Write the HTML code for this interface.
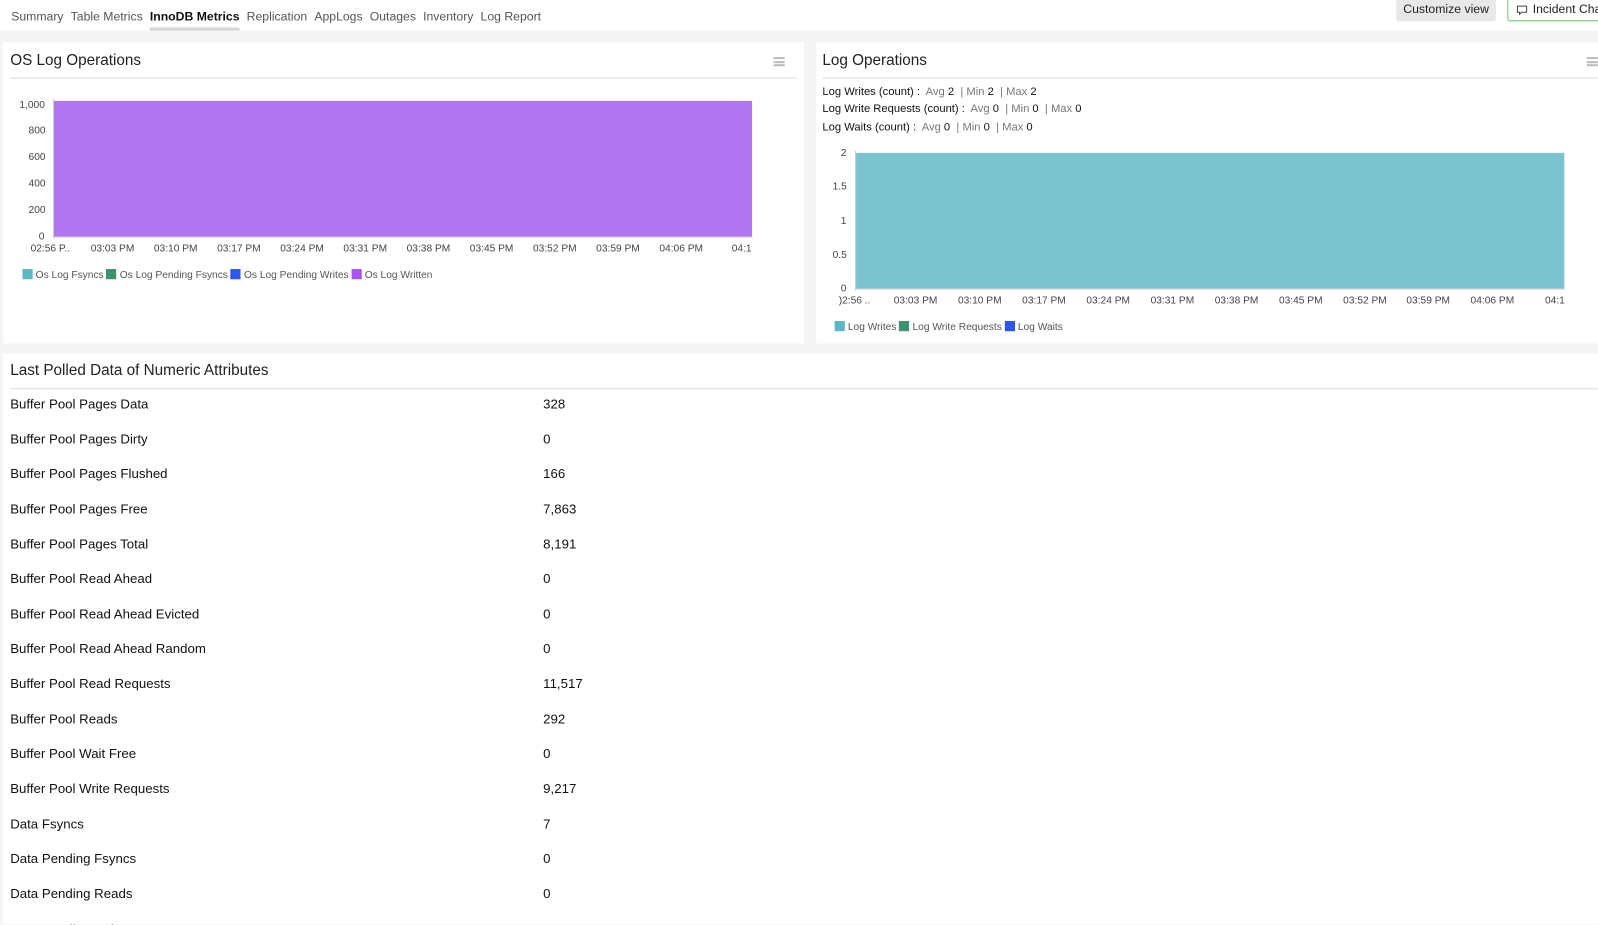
<!DOCTYPE html>
<html><head><meta charset="utf-8"><style>
*{margin:0;padding:0;box-sizing:border-box}
html,body{width:1598px;height:925px;overflow:hidden;background:#f5f5f5}
#w{position:absolute;left:0;top:0;width:1568px;height:907px;overflow:hidden;transform:scale(1.0191);transform-origin:0 0;font-family:"Liberation Sans",sans-serif;color:#222}
.top{position:absolute;left:0;top:0;width:1568px;height:30px;background:#fff}
.tabs{position:absolute;left:11px;top:9px;font-size:12px;color:#555;white-space:nowrap}
.tabs span{margin-right:7px}
.tabs .act{color:#111;font-weight:bold;border-bottom:3px solid #d5d5d5;padding-bottom:4px}
.btn1{position:absolute;left:1370px;top:0;width:98px;height:21px;background:#e8e8e8;border-radius:0 0 3px 3px;font-size:12px;text-align:center;line-height:18px;color:#222}
.btn2{position:absolute;left:1479px;top:0;width:130px;height:21px;border:1px solid #5cb85c;border-top:none;border-radius:0 0 3px 3px;font-size:12px;line-height:18px;padding-left:24px;color:#222;background:#fff}
.panel{position:absolute;background:#fff}
.ttl{position:absolute;left:7px;top:9px;font-size:15px;color:#222}
.hr{position:absolute;left:7px;right:7px;top:34px;height:1px;background:#ddd}
.menu{position:absolute;top:14px;width:11px;height:9px;border-top:2px solid #bbb;border-bottom:2px solid #bbb}
.menu:after{content:"";position:absolute;left:0;right:0;top:1.5px;height:2px;background:#bbb}
.ax{position:absolute;font-size:10px;color:#444}
.leg{position:absolute;font-size:10px;color:#555;white-space:nowrap}
.leg i{display:inline-block;width:10px;height:10px;vertical-align:-1px;margin-right:3px}
.stat{position:absolute;left:6px;font-size:11px;color:#111;white-space:nowrap}
.stat span{color:#777}
.row{position:absolute;left:7px;font-size:13px;color:#111}
.val{position:absolute;left:530px;font-size:13px;color:#111}
</style></head><body><div id="w">
<div class="top">
<div class="tabs"><span>Summary</span><span>Table Metrics</span><span class="act">InnoDB Metrics</span><span>Replication</span><span>AppLogs</span><span>Outages</span><span>Inventory</span><span>Log Report</span></div>
<div class="btn1">Customize view</div>
<div class="btn2"><svg style="position:absolute;left:8px;top:5px" width="11" height="10" viewBox="0 0 11 10"><path d="M1 1h9v6H5l-2 2V7H1z" fill="none" stroke="#444" stroke-width="1"/></svg>Incident Chat</div>
</div>

<div class="panel" style="left:3px;top:42px;width:786px;height:295px">
<div class="ttl">OS Log Operations</div><div class="menu" style="left:756px"></div><div class="hr"></div>
<div style="position:absolute;left:50px;top:57px;width:685px;height:134px;background:#b275f2;border-bottom:1px solid #ccc"></div>
<div style="position:absolute;left:49px;top:55px;width:1px;height:137px;background:#ccc"></div>
<div class="ax" style="left:16px;top:56px">1,000</div>
<div class="ax" style="left:25px;top:81px">800</div>
<div class="ax" style="left:25px;top:107px">600</div>
<div class="ax" style="left:25px;top:133px">400</div>
<div class="ax" style="left:25px;top:159px">200</div>
<div class="ax" style="left:35px;top:185px">0</div>
<div class="ax" style="left:27px;top:197px;width:720px"><span style="position:absolute;left:0">02:56 P..</span><span style="position:absolute;left:59px">03:03 PM</span><span style="position:absolute;left:121px">03:10 PM</span><span style="position:absolute;left:183px">03:17 PM</span><span style="position:absolute;left:245px">03:24 PM</span><span style="position:absolute;left:307px">03:31 PM</span><span style="position:absolute;left:369px">03:38 PM</span><span style="position:absolute;left:431px">03:45 PM</span><span style="position:absolute;left:493px">03:52 PM</span><span style="position:absolute;left:555px">03:59 PM</span><span style="position:absolute;left:617px">04:06 PM</span><span style="position:absolute;left:688px">04:1</span></div>
<div class="leg" style="left:19px;top:222px"><i style="background:#5bb8c4"></i>Os Log Fsyncs <i style="background:#3d9270"></i>Os Log Pending Fsyncs <i style="background:#2c56f0"></i>Os Log Pending Writes <i style="background:#a855ee"></i>Os Log Written</div>
</div>

<div class="panel" style="left:801px;top:42px;width:797px;height:295px">
<div class="ttl" style="left:6px">Log Operations</div><div class="menu" style="left:756px"></div><div class="hr" style="left:6px;right:0"></div>
<div class="stat" style="top:42px">Log Writes (count) :&nbsp; <span>Avg</span> 2 &nbsp;<span>|</span> <span>Min</span> 2 &nbsp;<span>|</span> <span>Max</span> 2</div>
<div class="stat" style="top:59px">Log Write Requests (count) :&nbsp; <span>Avg</span> 0 &nbsp;<span>|</span> <span>Min</span> 0 &nbsp;<span>|</span> <span>Max</span> 0</div>
<div class="stat" style="top:77px">Log Waits (count) :&nbsp; <span>Avg</span> 0 &nbsp;<span>|</span> <span>Min</span> 0 &nbsp;<span>|</span> <span>Max</span> 0</div>
<div style="position:absolute;left:39px;top:108px;width:695px;height:134px;background:#7bc4cf;border-bottom:1px solid #ccc"></div>
<div style="position:absolute;left:38px;top:106px;width:1px;height:137px;background:#ccc"></div>
<div class="ax" style="left:24px;top:103px">2</div>
<div class="ax" style="left:16px;top:136px">1.5</div>
<div class="ax" style="left:24px;top:170px">1</div>
<div class="ax" style="left:16px;top:203px">0.5</div>
<div class="ax" style="left:24px;top:236px">0</div>
<div class="ax" style="left:22px;top:248px;width:720px"><span style="position:absolute;left:0">)2:56 ..</span><span style="position:absolute;left:54px">03:03 PM</span><span style="position:absolute;left:117px">03:10 PM</span><span style="position:absolute;left:180px">03:17 PM</span><span style="position:absolute;left:243px">03:24 PM</span><span style="position:absolute;left:306px">03:31 PM</span><span style="position:absolute;left:369px">03:38 PM</span><span style="position:absolute;left:432px">03:45 PM</span><span style="position:absolute;left:495px">03:52 PM</span><span style="position:absolute;left:557px">03:59 PM</span><span style="position:absolute;left:620px">04:06 PM</span><span style="position:absolute;left:693px">04:1</span></div>
<div class="leg" style="left:18px;top:273px"><i style="background:#5bb8c4"></i>Log Writes <i style="background:#3d9270"></i>Log Write Requests <i style="background:#2c56f0"></i>Log Waits</div>
</div>

<div class="panel" style="left:3px;top:347px;width:1595px;height:600px">
<div class="ttl" style="top:8px">Last Polled Data of Numeric Attributes</div><div class="hr" style="right:0"></div>
<div class="row" style="top:42px">Buffer Pool Pages Data</div><div class="val" style="top:42px">328</div>
<div class="row" style="top:76px">Buffer Pool Pages Dirty</div><div class="val" style="top:76px">0</div>
<div class="row" style="top:110px">Buffer Pool Pages Flushed</div><div class="val" style="top:110px">166</div>
<div class="row" style="top:145px">Buffer Pool Pages Free</div><div class="val" style="top:145px">7,863</div>
<div class="row" style="top:179px">Buffer Pool Pages Total</div><div class="val" style="top:179px">8,191</div>
<div class="row" style="top:213px">Buffer Pool Read Ahead</div><div class="val" style="top:213px">0</div>
<div class="row" style="top:248px">Buffer Pool Read Ahead Evicted</div><div class="val" style="top:248px">0</div>
<div class="row" style="top:282px">Buffer Pool Read Ahead Random</div><div class="val" style="top:282px">0</div>
<div class="row" style="top:316px">Buffer Pool Read Requests</div><div class="val" style="top:316px">11,517</div>
<div class="row" style="top:351px">Buffer Pool Reads</div><div class="val" style="top:351px">292</div>
<div class="row" style="top:385px">Buffer Pool Wait Free</div><div class="val" style="top:385px">0</div>
<div class="row" style="top:419px">Buffer Pool Write Requests</div><div class="val" style="top:419px">9,217</div>
<div class="row" style="top:454px">Data Fsyncs</div><div class="val" style="top:454px">7</div>
<div class="row" style="top:488px">Data Pending Fsyncs</div><div class="val" style="top:488px">0</div>
<div class="row" style="top:522px">Data Pending Reads</div><div class="val" style="top:522px">0</div>
<div class="row" style="top:557px">Data Pending Writes</div><div class="val" style="top:557px">0</div>
</div>
</div></body></html>
